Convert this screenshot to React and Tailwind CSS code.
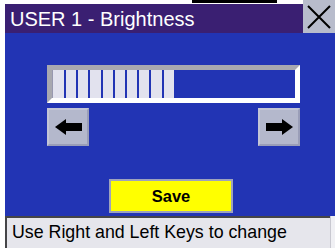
import React from 'react';

function Arrow({ dir }) {
  const pts = dir === 'left'
    ? '0,8 11,0 11,4 27,4 27,12 11,12 11,16'
    : '27,8 16,0 16,4 0,4 0,12 16,12 16,16';
  return (
    <svg width="27" height="16" viewBox="0 0 27 16">
      <polygon points={pts} fill="#000" />
    </svg>
  );
}

function KeyButton({ dir }) {
  return (
    <div className="w-[42px] h-[38px] flex items-center justify-center bg-[#b4b8cc] border-2 border-t-[#c4c6d6] border-l-[#c4c6d6] border-b-[#9a9eb8] border-r-[#9a9eb8]">
      <Arrow dir={dir} />
    </div>
  );
}

export default function App() {
  const cells = Array.from({ length: 10 });

  return (
    <div
      className="w-[335px] h-[248px] bg-white pl-[5px] flex flex-col overflow-hidden"
      style={{ fontFamily: '"Liberation Sans", Arial, sans-serif' }}
    >
      {/* Title bar */}
      <div className="flex h-[33px]">
        <div className="flex-1 flex flex-col">
          <div className="h-[4px] flex">
            <div className="ml-[187px] w-[85px] h-[3px] bg-black" />
          </div>
          <div className="flex-1 bg-[#3a1f72] flex items-center pl-[5px]">
            <span className="text-white text-[20px] leading-none">USER 1 - Brightness</span>
          </div>
        </div>
        <div className="w-[32px] bg-[#b8bccc] flex items-center justify-center">
          <svg width="24" height="24" viewBox="0 0 24 24">
            <path d="M1 1 L23 23 M23 1 L1 23" stroke="#000" strokeWidth="2" />
          </svg>
        </div>
      </div>

      {/* Body */}
      <div className="h-[183px] bg-[#2234b4] flex flex-col pl-[42px] pt-[32px]">
        <div className="w-[253px] h-[38px] flex border-[5px] border-t-[#a8a8b0] border-l-[#a8a8b0] border-b-white border-r-white">
          <div className="flex h-full">
            {cells.map((_, i) => (
              <div
                key={i}
                className={i === 0
                  ? 'w-[12px] h-full bg-[#e2e2ee] border-l border-[#9898b0]'
                  : 'w-[12.2px] h-full bg-[#e2e2ee] border-l-2 border-[#2234b4]'}
              />
            ))}
          </div>
        </div>

        <div className="w-[253px] flex justify-between mt-[5px]">
          <KeyButton dir="left" />
          <KeyButton dir="right" />
        </div>

        <div className="ml-[62px] mt-[33px] w-[124px] h-[34px] bg-[#ffff00] border-2 border-[#9ea2bc] flex items-center justify-center">
          <span className="text-[16.5px] font-bold text-black leading-none">Save</span>
        </div>
      </div>

      {/* Status bar */}
      <div className="flex h-[32px]">
        <div className="w-[325px] bg-[#e6e6ec] border-t-2 border-l-2 border-[#454548] flex items-center pl-[5px]">
          <span className="text-[17.8px] text-black leading-none">Use Right and Left Keys to change</span>
        </div>
        <div className="flex-1 bg-[#f0f0f4] border-l border-[#c8c8d0]" />
      </div>
    </div>
  );
}
